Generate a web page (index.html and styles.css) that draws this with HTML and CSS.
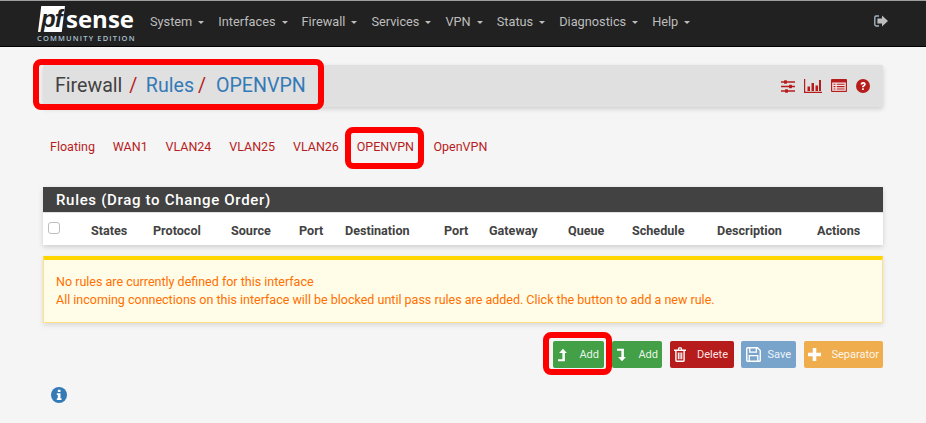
FILE: index.html
```html
<!DOCTYPE html>
<html lang="en">
<head>
<meta charset="utf-8">
<title>Firewall: Rules: OPENVPN</title>
<link rel="stylesheet" href="styles.css">
</head>
<body>
<header class="topbar">
  <a class="brand">
    <span class="brand-mark"><span class="pf-box"><span class="pf-text">pf</span></span><span class="sense">sense</span></span>
    <span class="edition">COMMUNITY EDITION</span>
  </a>
  <nav class="menu">
    <a class="menu-item">System<i class="caret"></i></a>
    <a class="menu-item">Interfaces<i class="caret"></i></a>
    <a class="menu-item">Firewall<i class="caret"></i></a>
    <a class="menu-item">Services<i class="caret"></i></a>
    <a class="menu-item">VPN<i class="caret"></i></a>
    <a class="menu-item">Status<i class="caret"></i></a>
    <a class="menu-item">Diagnostics<i class="caret"></i></a>
    <a class="menu-item">Help<i class="caret"></i></a>
  </nav>
  <svg class="logout" viewBox="0 0 14 12"><path d="M5 1H2.2C1.3 1 .8 1.6.8 2.4v7.2c0 .8.5 1.4 1.4 1.4H5" fill="none" stroke="#9fb4c4" stroke-width="1.4"/><path d="M8 .6 14 6 8 11.4V8.4H3.4V3.6H8z" fill="#bdbdbd"/></svg>
</header>
<main class="page">
  <section class="crumbs">
    <h1 class="crumb-title"><span>Firewall</span><em class="sep">/</em><a>Rules</a><em class="sep">/</em><a class="last">OPENVPN</a></h1>
    <div class="crumb-icons">
      <svg class="ic-sliders" viewBox="0 0 14 13"><path d="M0 2h14M0 6.5h14M0 11h14" stroke="#b71c1c" stroke-width="1.3"/><rect x="3" y=".3" width="3" height="3.4" rx=".6" fill="#b71c1c"/><rect x="8" y="4.8" width="3" height="3.4" rx=".6" fill="#b71c1c"/><rect x="4" y="9.3" width="3" height="3.4" rx=".6" fill="#b71c1c"/></svg>
      <svg class="ic-chart" viewBox="0 0 18 14"><path d="M.6 0v13.3H18" fill="none" stroke="#b71c1c" stroke-width="1.2"/><path d="M3.5 7.500H6V12H3.500zM7.500 4H10v8H7.500zM11.500 6.500H14V12h-2.500zM15 1h2v11h-2z" fill="#b71c1c"/></svg>
      <svg class="ic-list" viewBox="0 0 16 13"><path d="M1 0h14a1 1 0 0 1 1 1v11a1 1 0 0 1-1 1H1a1 1 0 0 1-1-1V1a1 1 0 0 1 1-1z" fill="#b71c1c"/><rect x="1.200" y="3.500" width="13.600" height="8.300" fill="#f3e5e5"/><path d="M2.500 5.200h2M2.500 7.600h2M2.500 10h2M5.800 5.200h7.800M5.800 7.600h7.800M5.800 10h7.800" stroke="#b71c1c" stroke-width="1.100"/></svg>
      <svg class="ic-help" viewBox="0 0 14 14"><circle cx="7" cy="7" r="7" fill="#b71c1c"/><path d="M4.600 5.400C4.800 3.900 5.800 3.100 7.200 3.100c1.400 0 2.500.9 2.500 2.200 0 1.100-.6 1.600-1.300 2-.5.3-.7.5-.7 1H6.100c0-1.100.4-1.600 1.100-2 .5-.3.8-.5.8-.9 0-.4-.3-.7-.8-.7-.6 0-.9.3-1 .9z" fill="#fff"/><rect x="6.100" y="9.300" width="1.700" height="1.700" fill="#fff"/></svg>
    </div>
  </section>
  <ul class="tabs">
    <li><a>Floating</a></li>
    <li><a>WAN1</a></li>
    <li><a>VLAN24</a></li>
    <li><a>VLAN25</a></li>
    <li><a>VLAN26</a></li>
    <li class="tab-marked"><a>OPENVPN</a></li>
    <li><a>OpenVPN</a></li>
  </ul>
  <section class="rules">
    <h2 class="rules-title">Rules (Drag to Change Order)</h2>
    <div class="rules-head">
      <span class="check"></span>
      <span>States</span><span>Protocol</span><span>Source</span><span>Port</span><span>Destination</span><span>Port</span><span>Gateway</span><span>Queue</span><span>Schedule</span><span>Description</span><span>Actions</span>
    </div>
  </section>
  <div class="notice">
    <p>No rules are currently defined for this interface</p>
    <p>All incoming connections on this interface will be blocked until pass rules are added. Click the button to add a new rule.</p>
  </div>
  <div class="actions">
    <span class="marked-btn"><a class="btn green"><svg class="btn-ic" viewBox="0 0 11 14"><path d="M5.500 0 9.800 4.800H7.600V14H0v-2.400h4.800V4.800H1.200z" fill="#fff"/></svg><span>Add</span></a></span>
    <a class="btn green second"><svg class="btn-ic" viewBox="0 0 11 14"><path d="M0 0h7.600v9.200h2.200L5.500 14 1.200 9.200h3.600V2.400H0z" fill="#fff"/></svg><span>Add</span></a>
    <a class="btn red"><svg class="btn-ic" viewBox="0 0 12 15"><path d="M0 2.600h12v1.500H0zM3.600 2.600 4.600.3h2.800l1 2.300H7L6.600 1.500H5.400L5 2.600z" fill="#fff"/><path d="M1.200 4.100v9.200c0 1 .6 1.700 1.400 1.700h6.800c.8 0 1.400-.7 1.400-1.700V4.100H9.400v9.400H2.600V4.100z" fill="#fff"/><path d="M3.800 5.500h1.100v6.800H3.800zM5.500 5.500h1.100v6.800H5.500zM7.200 5.500h1.100v6.800H7.200z" fill="#fff"/></svg><span>Delete</span></a>
    <a class="btn blue"><svg class="btn-ic ic-save" viewBox="0 0 14 14"><path d="M1.500.7h9.200l2.600 2.600v9.200c0 .5-.4.800-.8.800H1.500c-.4 0-.8-.3-.8-.8V1.500c0-.4.400-.8.800-.8z" fill="none" stroke="#fff" stroke-width="1.300"/><path d="M3.500 1v3.700h6.200V1M3 13V8h8v5" fill="none" stroke="#fff" stroke-width="1.200"/></svg><span>Save</span></a>
    <a class="btn orange"><svg class="btn-ic ic-plus" viewBox="0 0 13 13"><path d="M4.700 0h3.600v4.700H13v3.600H8.300V13H4.700V8.300H0V4.700h4.700z" fill="#fff"/></svg><span>Separator</span></a>
  </div>
  <svg class="info" viewBox="0 0 16 16"><circle cx="8" cy="8" r="8" fill="#337ab7"/><path d="M6.800 2.800h2.700v2.300H6.800zM5.800 6.300h3.700v5h1v1.800H5.800v-1.800h1V8.100h-1z" fill="#fff"/></svg>
</main>
</body>
</html>
```
FILE: styles.css
```css
* { box-sizing: border-box; }
html, body { margin: 0; padding: 0; height: 100%; overflow: hidden; }
body {
  background: #f5f5f5;
  color: #424242;
  font-family: Roboto, "Liberation Sans", sans-serif;
  font-size: 12.5px;
}
a { text-decoration: none; }
p, h1, h2, ul { margin: 0; padding: 0; }

.topbar {
  height: 47px;
  background: #212121;
  border-top: 1px solid #9e9e9e;
  border-bottom: 1px solid #000;
  display: flex;
  align-items: flex-start;
  padding-left: 37px;
}
.brand { width: 97px; display: flex; flex-direction: column; flex: none; }
.brand-mark { display: flex; height: 31px; padding: 5px 0 0 1px; align-items: flex-start; }
.pf-box {
  width: 27px;
  height: 26px;
  flex: none;
  background: #fff;
  clip-path: polygon(12% 0, 100% 0, 88% 100%, 0 100%);
  display: flex;
  justify-content: center;
}
.pf-text {
  font: italic 700 24px/25px "Liberation Sans", sans-serif;
  color: #212121;
  letter-spacing: -.8px;
}
.sense {
  font: 700 24px/24px "Open Sans", sans-serif;
  color: #fff;
  margin-left: 1px;
  margin-top: 1px;
}
.edition {
  font: 600 7.5px/9px "Open Sans", sans-serif;
  letter-spacing: 1.15px;
  color: #a8c0d0;
  white-space: nowrap;
  margin-top: 2px;
}
.menu { display: flex; margin-left: 9px; padding-top: 13px; }
.menu-item {
  color: #bdbdbd;
  font-size: 12.75px;
  line-height: 16px;
  padding: 0 7px;
  display: flex;
  align-items: center;
  white-space: nowrap;
}
.caret {
  width: 0;
  height: 0;
  margin-left: 6px;
  border-left: 3px solid transparent;
  border-right: 3px solid transparent;
  border-top: 3px solid #bdbdbd;
}
.logout { width: 14px; height: 12px; margin-left: auto; margin-right: 38px; margin-top: 14px; }

.page { padding: 18px 43px 0; }
.crumbs {
  height: 42px;
  background: #e0e0e0;
  border-radius: 2px;
  box-shadow: 0 2px 5px rgba(0, 0, 0, .16);
  display: flex;
  justify-content: space-between;
  align-items: flex-start;
}
.crumb-title {
  margin-left: -4px;
  width: 279px;
  height: 39px;
  padding: 9px 0 0 16px;
  font-size: 19.6px;
  line-height: 24px;
  font-weight: 400;
  color: #424242;
  outline: 6px solid #f00;
  border-radius: 2px;
  display: flex;
  white-space: nowrap;
}
.crumb-title a { color: #337ab7; }
.sep { color: #b71c1c; font-style: normal; margin: 0 0 0 7px; width: 16.5px; }
.sep + a + .sep { width: 18px; margin-left: 4px; }
.crumb-icons { display: flex; padding: 14px 13px 0 0; align-items: flex-start; }
.ic-sliders { width: 14px; height: 13px; margin-top: 1px; }
.ic-chart { width: 18px; height: 14px; margin-left: 9px; }
.ic-list { width: 16px; height: 13px; margin-left: 9px; }
.ic-help { width: 14px; height: 14px; margin-left: 9px; }

.tabs { list-style: none; display: flex; margin-top: 26px; height: 30px; gap: 5.8px; }
.tabs li { padding: 0 6px 4px; display: flex; align-items: center; }
.tabs li:first-child { padding-left: 7px; }
.tabs a { color: #b71c1c; white-space: nowrap; }
.tabs .tab-marked { outline: 6px solid #f00; border-radius: 2px; width: 67px; padding-right: 0; margin-right: 4px; }

.rules { margin-top: 24px; background: #fff; box-shadow: 0 2px 5px rgba(0, 0, 0, .16); }
.rules-title {
  height: 26px;
  background: #424242;
  color: #fff;
  border-bottom: 1px solid #e0e0e0;
  font-size: 15px;
  line-height: 27px;
  font-weight: 500;
  letter-spacing: .68px;
  padding-left: 13px;
}
.rules-head {
  height: 32px;
  padding-top: 2px;
  display: grid;
  grid-template-columns: 48px 62px 78px 68px 46px 99px 45px 79px 64px 85px 100px 66px;
  align-items: center;
  font-size: 12.6px;
  font-weight: 700;
  color: #424242;
}
.check {
  width: 12px;
  height: 12px;
  margin: -5px 0 0 5px;
  background: #fff;
  border: 1px solid #bdbdbd;
  border-radius: 3px;
}
.notice {
  margin-top: 11px;
  height: 67px;
  background: #fffde7;
  border: 1px solid #ffe082;
  border-top: 4px solid #ffd600;
  box-shadow: 0 2px 5px rgba(0, 0, 0, .12);
  padding: 13px 12px 0;
  color: #ff6f00;
  line-height: 18px;
}
.actions { display: flex; justify-content: flex-start; margin-top: 15px; padding-left: 506px; }
.marked-btn {
  display: block;
  width: 57px;
  height: 31px;
  padding: 3px 2px 1px 4px;
  outline: 6px solid #f00;
  border-radius: 2px;
}
.btn {
  height: 27px;
  margin-top: 3px;
  display: flex;
  align-items: center;
  justify-content: space-between;
  padding: 0 4px 0 5px;
  border-radius: 2px;
  color: rgba(255, 255, 255, .9);
  font-size: 11px;
  white-space: nowrap;
}
.marked-btn .btn { margin-top: 0; width: 51px; padding-right: 5px; }
.btn-ic { width: 10px; height: 14px; flex: none; }
.green { background: #43a047; }
.second { width: 50px; margin-left: 6px; }
.red { background: #b71c1c; width: 64px; margin-left: 8px; padding-left: 4px; padding-right: 6px; }
.red .btn-ic { width: 12px; height: 15px; }
.blue { background: #78a4cc; width: 55px; margin-left: 7px; padding-right: 5px; }
.blue .ic-save { width: 15px; height: 15px; }
.orange { background: #f0ad4e; width: 79px; margin-left: 8px; padding-left: 4px; }
.orange .ic-plus { width: 13px; height: 13px; }
.info { display: block; width: 16px; height: 16px; margin: 18px 0 0 8px; }
```
